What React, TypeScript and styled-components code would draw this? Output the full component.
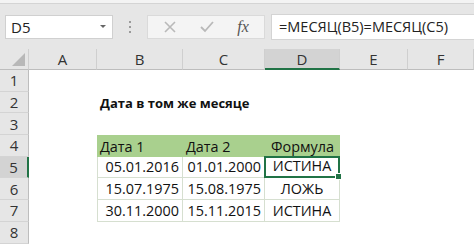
import React from 'react';
import styled, {createGlobalStyle} from 'styled-components';

const GlobalStyle = createGlobalStyle`
  html, body {
    margin: 0;
    padding: 0;
    background: #ffffff;
  }
`;

const Sheet = styled.div`
  width: 474px;
  height: 244px;
  overflow: hidden;
  background: #e6e6e6;
  font-family: "Open Sans", "Noto Sans", sans-serif;
  display: flex;
  flex-direction: column;
`;

const TopStrip = styled.div`
  height: 3px;
  background: #f3f3f3;
  border-bottom: 1px solid #d4d4d4;
`;

const FormulaBar = styled.div`
  display: flex;
  align-items: center;
  height: 25px;
  padding: 10px 0 0 5px;
  margin-bottom: 10px;
`;

const NameBox = styled.div`
  width: 108px;
  height: 24px;
  background: #fff;
  border: 1px solid #d0d0d0;
  display: flex;
  align-items: center;
  justify-content: space-between;
  padding: 0 6px 0 5px;
  box-sizing: border-box;
  font-size: 15px;
  color: #222;
`;

const Caret = styled.span`
  width: 0;
  height: 0;
  border-left: 3px solid transparent;
  border-right: 3px solid transparent;
  border-top: 3px solid #666;
`;

const Grip = styled.div`
  width: 34px;
  display: flex;
  flex-direction: column;
  align-items: center;
  gap: 3px;

  span {
    width: 2px;
    height: 2px;
    background: #9a9a9a;
  }
`;

const ButtonBox = styled.div`
  width: 118px;
  height: 24px;
  background: #f4f4f4;
  border: 1px solid #dadada;
  box-sizing: border-box;
  display: flex;
  align-items: center;
  justify-content: space-around;
  padding: 0 4px;
`;

const Fx = styled.span`
  font-family: "Liberation Serif", serif;
  font-style: italic;
  font-size: 16px;
  color: #555;
`;

const FormulaInput = styled.div`
  flex: 1;
  height: 26px;
  margin-left: 6px;
  background: #fff;
  border: 1px solid #d4d4d4;
  border-right: none;
  box-sizing: border-box;
  display: flex;
  align-items: center;
  padding-left: 7px;
  font-size: 14.5px;
  color: #222;
`;

const Grid = styled.div`
  display: grid;
  grid-template-columns: 29px 68px 86px 82px 75px 68px 66px;
  grid-template-rows: 21px repeat(8, 21.7px);
  background: #fff;
`;

const Corner = styled.div`
  background: #e6e6e6;
  border-right: 1px solid #cfcfcf;
  border-bottom: 1px solid #bdbdbd;
  box-sizing: border-box;
  position: relative;

  &::after {
    content: '';
    position: absolute;
    right: 3px;
    bottom: 3px;
    border-left: 13px solid transparent;
    border-bottom: 13px solid #b8b8b8;
  }
`;

const ColHead = styled.div<{$active?: boolean}>`
  background: ${p => (p.$active ? '#d3d3d3' : '#e6e6e6')};
  border-right: 1px solid #cfcfcf;
  border-bottom: ${p => (p.$active ? '2px solid #217346' : '1px solid #bdbdbd')};
  box-sizing: border-box;
  display: flex;
  align-items: center;
  justify-content: center;
  font-size: 15px;
  color: #333;
`;

const RowHead = styled.div<{$active?: boolean}>`
  background: ${p => (p.$active ? '#d3d3d3' : '#e6e6e6')};
  border-right: ${p => (p.$active ? '2px solid #217346' : '1px solid #bdbdbd')};
  border-bottom: 1px solid #d4d4d4;
  box-sizing: border-box;
  display: flex;
  align-items: center;
  justify-content: center;
  font-size: 15px;
  color: #333;
`;

const Cell = styled.div<{$align?: 'left' | 'right' | 'center'; $kind?: 'plain' | 'head' | 'data'; $bold?: boolean; $first?: boolean}>`
  display: flex;
  align-items: flex-end;
  justify-content: ${p => (p.$align === 'right' ? 'flex-end' : p.$align === 'center' ? 'center' : 'flex-start')};
  padding: 0 3px 0;
  box-sizing: border-box;
  font-size: ${p => (p.$bold ? '13px' : '14.4px')};
  line-height: 20px;
  font-weight: ${p => (p.$bold ? 700 : 400)};
  color: #111;
  white-space: nowrap;
  background: ${p => (p.$kind === 'head' ? '#a9d08e' : 'transparent')};
  border-left: ${p => (p.$kind === 'data' && p.$first ? '1px solid #d6dfd0' : 'none')};
  border-right: ${p => (p.$kind === 'data' ? '1px solid #d6dfd0' : 'none')};
  border-bottom: ${p => (p.$kind === 'data' ? '1px solid #d6dfd0' : 'none')};
`;

const Selected = styled(Cell)`
  position: relative;
  border: 2px solid #217346;
  margin: -1px 0 0 -1px;

  &::after {
    content: '';
    position: absolute;
    right: -4px;
    bottom: -4px;
    width: 5px;
    height: 5px;
    background: #217346;
    border: 1px solid #fff;
  }
`;

const cols = ['A', 'B', 'C', 'D', 'E', 'F'];

const rows: Array<[string, string, string]> = [
  ['05.01.2016', '01.01.2000', 'ИСТИНА'],
  ['15.07.1975', '15.08.1975', 'ЛОЖЬ'],
  ['30.11.2000', '15.11.2015', 'ИСТИНА'],
];

function Empty({n}: {n: number}) {
  return <>{Array.from({length: n}, (_, i) => <Cell key={i}/>)}</>;
}

export default function App() {
  return (
    <Sheet>
      <GlobalStyle/>
      <TopStrip/>
      <FormulaBar>
        <NameBox>
          D5
          <Caret/>
        </NameBox>
        <Grip><span/><span/><span/></Grip>
        <ButtonBox>
          <svg width="14" height="14" viewBox="0 0 14 14">
            <path d="M2 2 L12 12 M12 2 L2 12" stroke="#b9b9b9" strokeWidth="1.6" fill="none"/>
          </svg>
          <svg width="16" height="14" viewBox="0 0 16 14">
            <path d="M2 7 L6 11 L14 2" stroke="#b9b9b9" strokeWidth="1.8" fill="none"/>
          </svg>
          <Fx>fx</Fx>
        </ButtonBox>
        <FormulaInput>=МЕСЯЦ(B5)=МЕСЯЦ(C5)</FormulaInput>
      </FormulaBar>
      <Grid>
        <Corner/>
        {cols.map(c => <ColHead key={c} $active={c === 'D'}>{c}</ColHead>)}

        <RowHead>1</RowHead>
        <Empty n={6}/>

        <RowHead>2</RowHead>
        <Cell/>
        <Cell $bold>Дата в том же месяце</Cell>
        <Empty n={4}/>

        <RowHead>3</RowHead>
        <Empty n={6}/>

        <RowHead>4</RowHead>
        <Cell/>
        <Cell $kind="head">Дата 1</Cell>
        <Cell $kind="head">Дата 2</Cell>
        <Cell $kind="head" $align="center">Формула</Cell>
        <Empty n={2}/>

        {rows.map((r, i) => (
          <React.Fragment key={i}>
            <RowHead $active={i === 0}>{5 + i}</RowHead>
            <Cell/>
            <Cell $kind="data" $align="right" $first>{r[0]}</Cell>
            <Cell $kind="data" $align="right">{r[1]}</Cell>
            {i === 0
              ? <Selected $kind="data" $align="center">{r[2]}</Selected>
              : <Cell $kind="data" $align="center">{r[2]}</Cell>}
            <Empty n={2}/>
          </React.Fragment>
        ))}

        <RowHead>8</RowHead>
        <Empty n={6}/>
      </Grid>
    </Sheet>
  );
}
